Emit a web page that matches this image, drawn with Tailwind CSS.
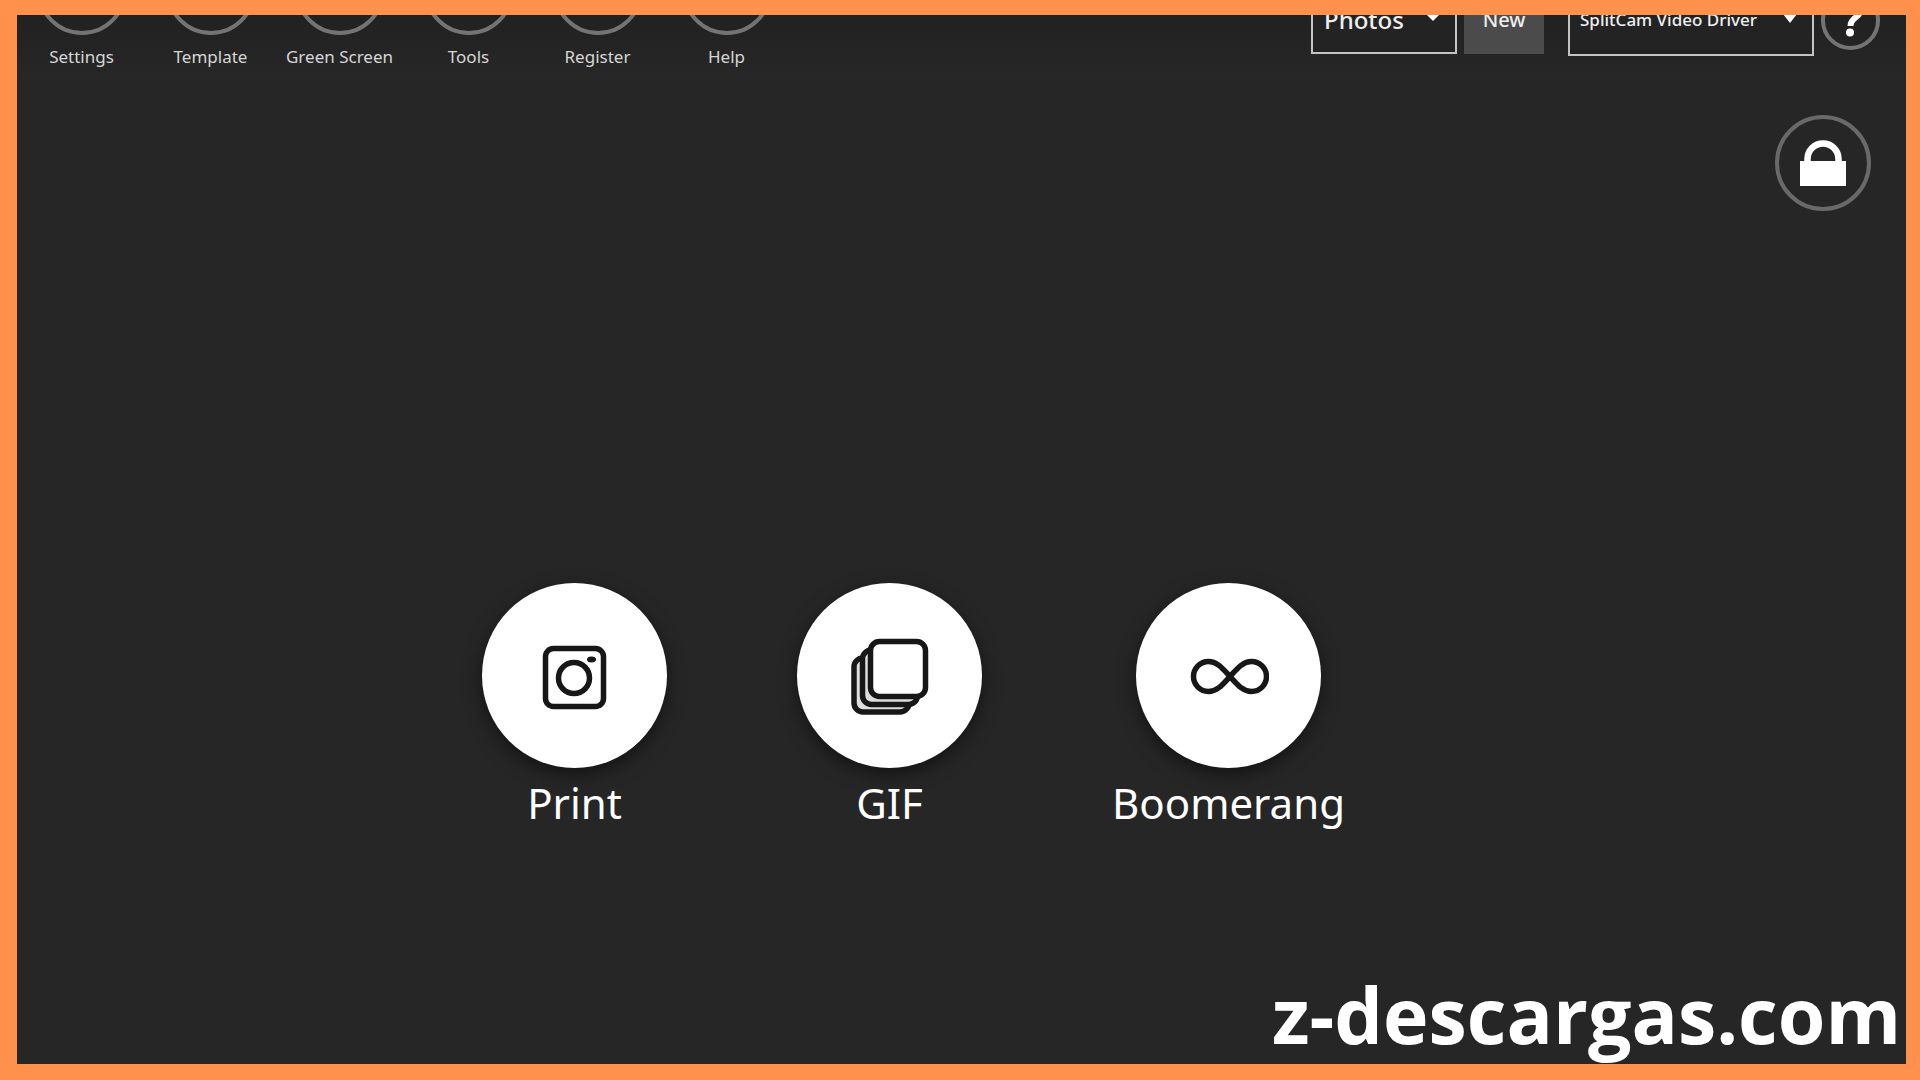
<!DOCTYPE html>
<html lang="en">
<head>
<meta charset="utf-8">
<meta name="viewport" content="width=device-width, initial-scale=1">
<title>Photo Booth</title>
<script src="https://cdn.jsdelivr.net/npm/@tailwindcss/browser@4"></script>
</head>
<body class="flex min-h-screen flex-col bg-[#ff914d] pt-[15px] pr-[14px] pb-4 pl-[17px] font-['Noto_Sans','Open_Sans',sans-serif] text-white">
<div class="flex flex-1 flex-col overflow-hidden bg-[#262626]">

  <!-- Toolbar, scrolled partly out of view -->
  <header class="-mt-[70px] flex h-[135px] items-start justify-between bg-linear-to-b from-[#212121] from-50% to-[#272727] pr-[26px]">
    <nav class="flex text-[17px] leading-6 text-[#d6d6d6]">
      <a href="#settings" class="flex w-[129px] flex-col items-center gap-[10px]"><span class="size-[90px] rounded-full border-4 border-[#747474]"></span>Settings</a>
      <a href="#template" class="flex w-[129px] flex-col items-center gap-[10px]"><span class="size-[90px] rounded-full border-4 border-[#747474]"></span>Template</a>
      <a href="#green-screen" class="flex w-[129px] flex-col items-center gap-[10px]"><span class="size-[90px] rounded-full border-4 border-[#747474]"></span>Green Screen</a>
      <a href="#tools" class="flex w-[129px] flex-col items-center gap-[10px]"><span class="size-[90px] rounded-full border-4 border-[#747474]"></span>Tools</a>
      <a href="#register" class="flex w-[129px] flex-col items-center gap-[10px]"><span class="size-[90px] rounded-full border-4 border-[#747474]"></span>Register</a>
      <a href="#help" class="flex w-[129px] flex-col items-center gap-[10px]"><span class="size-[90px] rounded-full border-4 border-[#747474]"></span>Help</a>
    </nav>

    <div class="flex items-center pt-[39px]">
      <div class="relative">
        <select aria-label="Event" class="block h-[68px] w-[146px] appearance-none border-2 border-[#c4c4c4] bg-[#232323] pl-[11px] text-[24px] font-medium text-[#eeeeee]"><option>Photos</option></select>
        <svg class="pointer-events-none absolute top-[27px] right-4 h-2 w-4" viewBox="0 0 16 8" fill="#fff"><path d="M0 0h16L8 8z"/></svg>
      </div>
      <button type="button" class="ml-[7px] h-[68px] w-[80px] bg-[#4b4b4b] text-xl font-medium text-[#eeeeee]">New</button>
      <div class="relative ml-6">
        <select aria-label="Camera" class="block h-[72px] w-[246px] appearance-none border-2 border-[#c4c4c4] bg-[#232323] pl-[10px] text-[17px] font-medium text-[#eeeeee]"><option>SplitCam Video Driver</option></select>
        <svg class="pointer-events-none absolute top-[30px] right-4 h-[9px] w-4" viewBox="0 0 16 9" fill="#fff"><path d="M1 0h14L8 9z"/></svg>
      </div>
      <button type="button" aria-label="Help" class="ml-[7px] flex size-[59px] items-center justify-center rounded-full border-4 border-[#747474]">
        <svg class="h-9 w-6" viewBox="0 0 24 36" fill="none"><path d="M3 9C4 4 8 2 12 2c6 0 9 3 9 7 0 7-9.500 6-9.500 15" stroke="#fff" stroke-width="6"/><circle cx="11" cy="30.500" r="4" fill="#fff"/></svg>
      </button>
    </div>
  </header>

  <main class="flex flex-col">
    <button type="button" aria-label="Lock" class="mt-[35px] mr-[35px] flex size-24 items-center justify-center self-end rounded-full border-4 border-[#696969]">
      <svg class="size-[46px]" viewBox="0 0 46 46"><path d="M0 21h46v25H0z" fill="#fff"/><path d="M7.500 22v-3a15.500 15.500 0 0 1 31 0v3" fill="none" stroke="#fff" stroke-width="6.500"/></svg>
    </button>

    <div class="mt-[372px] flex justify-center gap-[130px] pr-[96px] text-[42px] leading-[58px]">
      <button type="button" class="flex flex-col items-center gap-[6px]">
        <span class="flex size-[185px] items-center justify-center rounded-full bg-white shadow-[0_6px_18px_rgba(0,0,0,0.5)]">
          <svg class="size-20" viewBox="0 0 80 80" fill="none" stroke="#171717"><rect x="10.500" y="12.500" width="58" height="58" rx="8" stroke-width="5.500"/><circle cx="39" cy="42" r="15.500" stroke-width="5.500"/><ellipse cx="56.500" cy="23.500" rx="4.500" ry="3" fill="#171717" stroke="none"/></svg>
        </span>
        Print
      </button>
      <button type="button" class="flex flex-col items-center gap-[6px]">
        <span class="flex size-[185px] items-center justify-center rounded-full bg-white shadow-[0_6px_18px_rgba(0,0,0,0.5)]">
          <svg class="size-20" viewBox="0 0 80 80" stroke="#171717" stroke-width="5.500"><rect x="4" y="22" width="55" height="54" rx="9" fill="#dedede"/><rect x="12.500" y="14" width="55" height="54.500" rx="9" fill="#dedede"/><rect x="20.500" y="5.500" width="55" height="55" rx="9" fill="#fff"/></svg>
        </span>
        GIF
      </button>
      <button type="button" class="flex flex-col items-center gap-[6px]">
        <span class="flex size-[185px] items-center justify-center rounded-full bg-white shadow-[0_6px_18px_rgba(0,0,0,0.5)]">
          <svg class="size-20" viewBox="0 0 80 80" fill="none" stroke="#171717" stroke-width="5.500"><path d="M41 40.500C34.500 33.500 28.500 25.500 19.500 25.500a15 15 0 0 0 0 30C28.500 55.500 34.500 47.500 41 40.500S53.500 25.500 62.500 25.500a15 15 0 0 1 0 30C53.500 55.500 47.500 47.500 41 40.500z"/></svg>
        </span>
        Boomerang
      </button>
    </div>
  </main>

  <footer class="mt-auto pr-[5px] text-right font-['Open_Sans','Noto_Sans',sans-serif] text-[77px] leading-[98px] font-bold">z-descargas.com</footer>
</div>
</body>
</html>
